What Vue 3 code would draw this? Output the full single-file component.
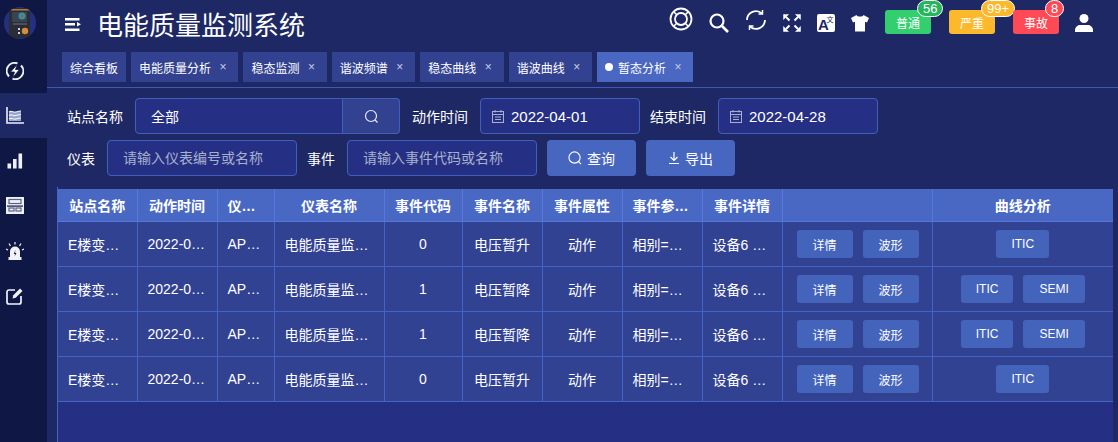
<script setup>
const tabs = [
  { name: '综合看板', closable: false },
  { name: '电能质量分析', closable: true },
  { name: '稳态监测', closable: true },
  { name: '谐波频谱', closable: true },
  { name: '稳态曲线', closable: true },
  { name: '谐波曲线', closable: true },
  { name: '暂态分析', closable: true, active: true },
];

const columns = [
  { label: '站点名称', width: 79 },
  { label: '动作时间', width: 80 },
  { label: '仪表编号', width: 57 },
  { label: '仪表名称', width: 110 },
  { label: '事件代码', width: 78 },
  { label: '事件名称', width: 80 },
  { label: '事件属性', width: 80 },
  { label: '事件参数详情', width: 80 },
  { label: '事件详情', width: 80 },
  { label: '', width: 150 },
  { label: '曲线分析', width: 181 },
];

const rows = [
  { code: 0, name: '电压暂升', time: '2022-04-01 10:12:30', semi: false },
  { code: 1, name: '电压暂降', time: '2022-04-03 14:25:11', semi: true },
  { code: 1, name: '电压暂降', time: '2022-04-09 08:40:52', semi: true },
  { code: 0, name: '电压暂升', time: '2022-04-21 19:03:07', semi: false },
];

const alerts = [
  { label: '普通', count: '56', type: 'green' },
  { label: '严重', count: '99+', type: 'yellow' },
  { label: '事故', count: '8', type: 'red' },
];
</script>

<template>
  <div class="layout">
    <aside class="sidebar">
      <div class="logo">
        <svg width="32" height="32" viewBox="0 0 32 32">
          <defs>
            <clipPath id="logo-clip"><circle cx="16" cy="16" r="16" /></clipPath>
          </defs>
          <circle cx="16" cy="16" r="16" fill="#243080" />
          <g clip-path="url(#logo-clip)">
            <rect x="5" y="1" width="21" height="30" fill="#2b2d36" />
            <rect x="7" y="2" width="19" height="1.500" fill="#b5793c" />
            <rect x="8" y="5" width="15" height="10" fill="#3a4350" />
            <circle cx="18" cy="9" r="3.500" fill="#1f9bb0" />
            <circle cx="18" cy="9" r="1.600" fill="#d8452e" />
            <rect x="9" y="16.500" width="14" height="1" fill="#6a7280" />
            <circle cx="21" cy="24" r="3.200" fill="#d98a3a" />
            <rect x="14" y="21" width="2" height="2" fill="#cfd4da" />
            <rect x="14" y="25" width="2" height="2" fill="#cfd4da" />
          </g>
        </svg>
      </div>
      <div class="side-item">
        <svg width="18" height="18" viewBox="0 0 18 18">
          <path d="M3 14.500A8 8 0 0 1 11.500 1.400M15 3.500A8 8 0 0 1 6.500 16.600" fill="none" stroke="#eef0f7" stroke-width="2" />
          <path d="M11.500 2 4.500 10h4l-2 6 7-8.500H9.500z" fill="#fff" stroke="#0f1745" stroke-width="0.800" />
        </svg>
      </div>
      <div class="side-item active">
        <svg width="18" height="17" viewBox="0 0 18 17" fill="none">
          <path d="M1 0v16h17" stroke="#eef0f7" stroke-width="1.600" />
          <path d="M3 5c3-2 4 1 7 0s3-1 5-1v10H3z" fill="#9aa3c9" />
          <path d="M3 5c3-2 4 1 7 0s3-1 5-1M3 8.500c3-2 4 1 7 0s3-1 5-1M3 12c3-2 4 1 7 0s3-1 5-1" stroke="#eef0f7" stroke-width="1.200" />
        </svg>
      </div>
      <div class="side-item">
        <svg width="16" height="16" viewBox="0 0 16 16" fill="#eef0f7">
          <rect x="0.500" y="10.500" width="3.600" height="5" />
          <rect x="6" y="6" width="3.600" height="9.500" />
          <rect x="11.500" y="0.500" width="3.600" height="15" />
        </svg>
      </div>
      <div class="side-item">
        <svg width="18" height="17" viewBox="0 0 18 17">
          <rect width="18" height="17" fill="#eef0f7" />
          <rect x="3" y="2.500" width="12" height="4" fill="none" stroke="#5a6288" stroke-width="1.200" />
          <rect x="1" y="8.500" width="16" height="1.200" fill="#0f1745" />
          <rect x="3" y="11" width="5" height="3" fill="none" stroke="#5a6288" stroke-width="1.200" />
          <rect x="10" y="11" width="5" height="3" fill="none" stroke="#5a6288" stroke-width="1.200" />
        </svg>
      </div>
      <div class="side-item">
        <svg width="18" height="18" viewBox="0 0 18 18">
          <path d="M4 16V9.500a5 5 0 0 1 10 0V16z" fill="#f1f3f9" />
          <rect x="2.500" y="15" width="13" height="3" fill="#f1f3f9" />
          <path d="M9.400 8 7.800 12h1.300l-.6 2.500L10.500 11H9.100z" fill="#0f1745" />
          <path d="M9 0v2.500M3 1.500 4.500 4M15 1.500 13.500 4M0 7l2 1M18 7l-2 1" stroke="#f1f3f9" stroke-width="1.200" />
        </svg>
      </div>
      <div class="side-item">
        <svg width="18" height="18" viewBox="0 0 18 18">
          <path d="M9 3H3a2 2 0 0 0-2 2v10a2 2 0 0 0 2 2h10a2 2 0 0 0 2-2V9" fill="none" stroke="#f1f3f9" stroke-width="1.700" />
          <path d="M6.500 11.500 7.300 8.300 14 1.500l2.500 2.500-6.800 6.700z" fill="#f1f3f9" />
        </svg>
      </div>
    </aside>

    <main class="main">
      <header class="topbar">
        <div class="topbar-left">
          <svg class="menu-icon" width="16" height="13" viewBox="0 0 16 13">
            <path d="M0 0h14.500v2.500H0zM0 5h10v2.500H0zM0 10.500h14.500V13H0z" fill="#fff" />
            <path d="M12 4l4 2.300-4 2.300z" fill="#fff" />
          </svg>
          <h1 class="title">电能质量监测系统</h1>
        </div>
        <div class="topbar-right">
          <svg class="lift-lg" width="24" height="24" viewBox="0 0 24 24" fill="none" stroke="#fff">
            <circle cx="12" cy="12" r="10.500" stroke-width="1.800" />
            <circle cx="12" cy="12" r="6" stroke-width="1.800" />
            <path d="M5 5l3 3M19 5l-3 3M5 19l3-3M19 19l-3-3" stroke-width="1.500" />
          </svg>
          <svg class="drop" width="20" height="20" viewBox="0 0 20 20" fill="none" stroke="#fff">
            <circle cx="8" cy="8" r="6.500" stroke-width="2.200" />
            <path d="M13 13 19 19" stroke-width="2.600" />
          </svg>
          <svg class="lift-sm" width="22" height="22" viewBox="0 0 22 22" fill="none" stroke="#fff" stroke-width="1.800">
            <path d="M2 11a9 9 0 0 1 15-6.500" />
            <path d="M20 11a9 9 0 0 1-15 6.500" />
            <path d="M17.500 1v4h-4M4.500 21v-4h4" stroke-width="1.500" />
          </svg>
          <svg class="drop" width="18" height="18" viewBox="0 0 18 18" fill="#fff" stroke="#fff">
            <path d="M0.500 0.500h5l-5 5zM17.500 0.500v5l-5-5zM0.500 17.500v-5l5 5zM17.500 17.500h-5l5-5z" stroke-width="0.500" />
            <path d="M3 3l3.500 3.500M15 3l-3.500 3.500M3 15l3.500-3.500M15 15l-3.500-3.500" stroke-width="2" />
          </svg>
          <svg class="drop" width="18" height="18" viewBox="0 0 18 18">
            <rect width="18" height="18" rx="2" fill="#fff" />
            <text x="1" y="16" class="translate-a">A</text>
            <text x="9.500" y="8" class="translate-b">文</text>
          </svg>
          <svg class="drop" width="18" height="18" viewBox="0 0 18 18" fill="#fff">
            <path d="M5.500 1 0 4l2 4.500 2-.8V17.500h10V7.700l2 .8L18 4l-5.500-3c-.5 2-6.500 2-7 0z" />
          </svg>
          <div class="alerts">
            <button v-for="a in alerts" :key="a.label" class="alert" :class="a.type">
              {{ a.label }}
              <sup class="count">{{ a.count }}</sup>
            </button>
          </div>
          <svg class="drop" width="18" height="18" viewBox="0 0 18 18" fill="#fff">
            <circle cx="9" cy="4.500" r="4.500" />
            <path d="M0 18v-2c0-3 3-5 5-5h8c2 0 5 2 5 5v2z" />
          </svg>
        </div>
      </header>

      <nav class="tabs">
        <div v-for="t in tabs" :key="t.name" class="tab" :class="{ active: t.active }">
          <span v-if="t.active" class="dot"></span>
          <span>{{ t.name }}</span>
          <span v-if="t.closable" class="close">×</span>
        </div>
      </nav>

      <section class="filters">
        <div class="filter-row">
          <label class="lbl">站点名称</label>
          <div class="site-select">
            <input class="input site-input" value="全部" />
            <span class="site-btn">
              <svg width="15" height="15" viewBox="0 0 15 15" fill="none" stroke="#e8ebf4" stroke-width="1.200">
                <circle cx="7" cy="7" r="5.500" />
                <path d="M11 11l2.500 2.500" />
              </svg>
            </span>
          </div>
          <label class="lbl">动作时间</label>
          <div class="date-box">
            <svg class="cal" width="12" height="13" viewBox="0 0 12 13" fill="none" stroke="#a9b0cc">
              <rect x="0.500" y="1.500" width="11" height="11" />
              <path d="M0.500 4.500h11M3 0v2.500M9 0v2.500M3 7h6M3 9.500h6" />
            </svg>
            <span>2022-04-01</span>
          </div>
          <label class="lbl">结束时间</label>
          <div class="date-box">
            <svg class="cal" width="12" height="13" viewBox="0 0 12 13" fill="none" stroke="#a9b0cc">
              <rect x="0.500" y="1.500" width="11" height="11" />
              <path d="M0.500 4.500h11M3 0v2.500M9 0v2.500M3 7h6M3 9.500h6" />
            </svg>
            <span>2022-04-28</span>
          </div>
        </div>
        <div class="filter-row">
          <label class="lbl">仪表</label>
          <input class="input text-input" placeholder="请输入仪表编号或名称" />
          <label class="lbl">事件</label>
          <input class="input text-input" placeholder="请输入事件代码或名称" />
          <button class="btn">
            <svg width="14" height="14" viewBox="0 0 15 15" fill="none" stroke="#fff" stroke-width="1.200">
              <circle cx="7" cy="7" r="6" />
              <path d="M11 11l3 3" />
            </svg>
            查询
          </button>
          <button class="btn">
            <svg width="12" height="12" viewBox="0 0 12 12" fill="none" stroke="#fff" stroke-width="1.200">
              <path d="M6 0v8M2.500 5 6 8.500 9.500 5M1 11.500h10" />
            </svg>
            导出
          </button>
        </div>
      </section>

      <section class="table-wrap">
        <table class="data-table">
          <colgroup>
            <col v-for="c in columns" :key="c.label" :style="{ width: c.width + 'px' }" />
          </colgroup>
          <thead>
            <tr>
              <th v-for="c in columns" :key="c.label"><div class="cell">{{ c.label }}</div></th>
            </tr>
          </thead>
          <tbody>
            <tr v-for="(r, i) in rows" :key="i">
              <td><div class="cell left">E楼变电所进线柜</div></td>
              <td><div class="cell left">{{ r.time }}</div></td>
              <td><div class="cell left">APM800</div></td>
              <td><div class="cell left">电能质量监测装置</div></td>
              <td><div class="cell">{{ r.code }}</div></td>
              <td><div class="cell">{{ r.name }}</div></td>
              <td><div class="cell">动作</div></td>
              <td><div class="cell left">相别=A相，幅值=80%</div></td>
              <td><div class="cell left">设备6 发生{{ r.name }}</div></td>
              <td>
                <div class="actions">
                  <button class="mini wide">详情</button>
                  <button class="mini wide">波形</button>
                </div>
              </td>
              <td>
                <div class="actions center">
                  <button class="mini">ITIC</button>
                  <button v-if="r.semi" class="mini semi">SEMI</button>
                </div>
              </td>
            </tr>
          </tbody>
        </table>
        <div class="table-empty"></div>
      </section>
    </main>
  </div>
</template>

<style scoped>
.layout {
  display: flex;
  width: 1118px;
  height: 442px;
  overflow: hidden;
  background: #1e2864;
  color: #fff;
  font-family: "Liberation Sans", "Noto Sans CJK SC", sans-serif;
  font-size: 14px;
}

.sidebar {
  width: 47px;
  flex-shrink: 0;
  background: #0f1745;
}

.logo {
  height: 48px;
  padding: 7px 0 0 4px;
  box-sizing: border-box;
}

.logo svg {
  display: block;
}

.side-item {
  height: 45px;
  display: flex;
  align-items: center;
  justify-content: center;
  padding-right: 17px;
  box-sizing: border-box;
}

.side-item.active {
  background: #1e2864;
}

.main {
  flex: 1;
  min-width: 0;
  display: flex;
  flex-direction: column;
}

.topbar {
  height: 48px;
  flex-shrink: 0;
  display: flex;
  align-items: center;
  justify-content: space-between;
  padding: 0 25px 0 18px;
  box-sizing: border-box;
}

.topbar-left {
  display: flex;
  align-items: center;
  gap: 17px;
}

.menu-icon {
  margin-top: 1px;
}

.title {
  margin: 3px 0 0 -1px;
  font-size: 26px;
  font-weight: 400;
  line-height: 34px;
}

.topbar-right {
  display: flex;
  align-items: center;
  gap: 16px;
  padding-bottom: 4px;
}

.lift-lg {
  margin-bottom: 6px;
}

.lift-sm {
  margin-bottom: 4px;
}

.drop {
  margin-top: 2px;
}

.translate-a {
  font-size: 15px;
  font-weight: 700;
  fill: #1e2864;
  font-family: "Liberation Sans", sans-serif;
}

.translate-b {
  font-size: 7px;
  fill: #1e2864;
}

.alerts {
  display: flex;
  gap: 18px;
}

.alert {
  position: relative;
  width: 46px;
  height: 24px;
  padding: 0;
  border: 0;
  border-radius: 3px;
  color: #fff;
  font: inherit;
  font-size: 12px;
}

.alert.green { background: #33cf6f; }
.alert.yellow { background: #fcb92c; }
.alert.red { background: #ff4a55; }

.count {
  position: absolute;
  left: 32px;
  top: -10px;
  height: 17px;
  min-width: 18px;
  padding: 0 5px;
  box-sizing: border-box;
  border: 1px solid #fff;
  border-radius: 9px;
  font-size: 13px;
  line-height: 15px;
  color: #fff;
  background: inherit;
}

.alert.green .count { background: #26b55c; }

.tabs {
  display: flex;
  gap: 5px;
  margin-top: 4px;
  padding: 0 0 5px 15px;
  border-bottom: 1px solid #3f5ab5;
}

.tab {
  height: 30px;
  display: flex;
  align-items: center;
  padding: 0 8px;
  background: #324291;
  font-size: 12px;
}

.tab:has(.close) {
  padding-right: 10.400px;
}

.tab.active {
  background: #4a67c2;
}

.dot {
  width: 8px;
  height: 8px;
  margin-right: 5px;
  border-radius: 50%;
  background: #fff;
}

.close {
  margin-left: 7px;
  width: 10px;
  text-align: center;
  color: #c6cde6;
  font-size: 12px;
}

.filters {
  padding: 10px 0 0 20px;
  display: flex;
  flex-direction: column;
  gap: 6px;
}

.filter-row {
  display: flex;
  align-items: center;
  height: 36px;
}

.lbl {
  margin-right: 12px;
  white-space: nowrap;
}

.input {
  height: 36px;
  box-sizing: border-box;
  padding: 0 15px;
  border: 1px solid #4160bc;
  border-radius: 4px;
  background: #253084;
  color: #fff;
  font: inherit;
  outline: none;
}

.input::placeholder {
  color: #a9b0cc;
}

.site-select {
  display: flex;
  width: 265px;
  height: 36px;
  margin-right: 12px;
}

.site-input {
  flex: 1;
  min-width: 0;
  border-radius: 4px 0 0 4px;
}

.site-btn {
  width: 57px;
  display: flex;
  align-items: center;
  justify-content: center;
  box-sizing: border-box;
  border: 1px solid #4160bc;
  border-left: 0;
  border-radius: 0 4px 4px 0;
  background: #324291;
}

.date-box {
  width: 160px;
  height: 36px;
  box-sizing: border-box;
  display: flex;
  align-items: center;
  gap: 7px;
  padding-left: 11px;
  margin-right: 10px;
  border: 1px solid #4160bc;
  border-radius: 4px;
  background: #253084;
  font-size: 15px;
}

.text-input {
  width: 190px;
  margin-right: 10px;
}

.btn {
  width: 89px;
  height: 36px;
  margin-right: 10px;
  display: flex;
  align-items: center;
  justify-content: center;
  gap: 5px;
  padding: 0;
  border: 0;
  border-radius: 4px;
  background: #4766c0;
  color: #fff;
  font: inherit;
}

.table-wrap {
  flex: 1;
  min-height: 0;
  margin: 11px 5px 0 10px;
  padding-top: 2px;
  border-left: 1px solid #4464c4;
  display: flex;
  flex-direction: column;
}

.data-table {
  width: 1055px;
  table-layout: fixed;
  border-collapse: collapse;
  background: #324293;
}

.data-table th,
.data-table td {
  padding: 0;
  border: 1px solid #4464c4;
  border-top: 0;
  text-align: center;
}

.data-table th:first-child,
.data-table td:first-child {
  border-left: 0;
}

.data-table th:last-child,
.data-table td:last-child {
  border-right: 0;
}

.data-table th {
  height: 32px;
  background: #4968c4;
  font-weight: 700;
  border-color: #5478dc;
}

.data-table td {
  height: 44px;
}

.cell {
  padding: 0 10px;
  overflow: hidden;
  white-space: nowrap;
  text-overflow: ellipsis;
}

.cell.left {
  text-align: left;
}

.actions {
  display: flex;
  gap: 10px;
  padding-left: 14px;
}

.actions.center {
  justify-content: center;
  padding-left: 0;
}

.mini {
  height: 28px;
  padding: 0 15px;
  border: 0;
  border-radius: 3px;
  background: #4464bc;
  color: #fff;
  font: inherit;
  font-size: 12px;
}

.mini.wide {
  width: 56px;
  padding: 0;
}

.mini.semi {
  padding: 0 16px;
}

.table-empty {
  flex: 1;
  background: #253084;
}
</style>

<style>
html, body {
  margin: 0;
  background: #1e2864;
}
</style>
